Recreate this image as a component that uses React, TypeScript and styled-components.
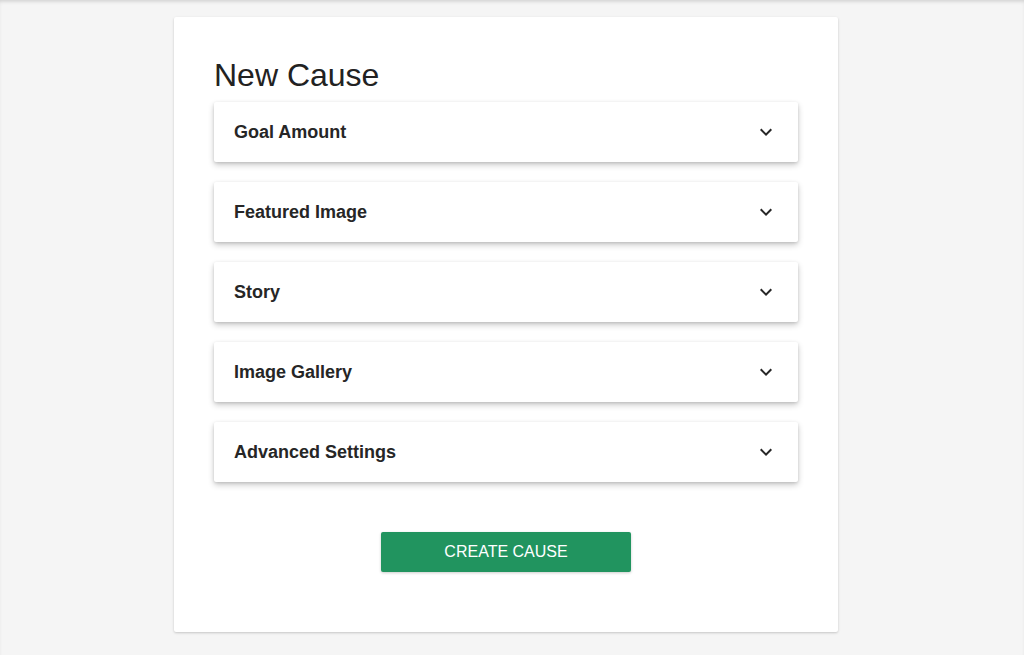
import styled, { createGlobalStyle } from "styled-components";

const GlobalStyle = createGlobalStyle`
  html, body {
    margin: 0;
    padding: 0;
    background-color: #f5f5f5;
    font-family: "Liberation Sans", Arial, sans-serif;
  }
`;

const Page = styled.div`
  min-height: 655px;
  box-sizing: border-box;
  padding: 17px 0 23px 174px;
  box-shadow: inset 0 3px 4px -2px rgba(0, 0, 0, 0.18);
`;

const Card = styled.div`
  width: 664px;
  box-sizing: border-box;
  padding: 39px 40px 60px;
  background-color: #fff;
  border-radius: 2px;
  box-shadow: 0 1px 3px rgba(0, 0, 0, 0.12), 0 1px 2px rgba(0, 0, 0, 0.08);
`;

const Title = styled.h1`
  margin: 0 0 8px;
  font-size: 32px;
  line-height: 38px;
  font-weight: 400;
  color: #222;
`;

const PanelList = styled.div`
  display: flex;
  flex-direction: column;
  gap: 20px;
`;

const Panel = styled.div`
  height: 60px;
  box-sizing: border-box;
  padding: 0 20px;
  display: flex;
  align-items: center;
  justify-content: space-between;
  background-color: #fff;
  border-radius: 2px;
  box-shadow: 0 3px 6px rgba(0, 0, 0, 0.2), 0 1px 3px rgba(0, 0, 0, 0.12);
  cursor: pointer;
`;

const PanelTitle = styled.span`
  font-size: 18px;
  font-weight: 700;
  color: #262626;
`;

const ChevronIcon = styled.svg`
  width: 24px;
  height: 24px;
  fill: #262626;
`;

const Actions = styled.div`
  display: flex;
  justify-content: center;
  margin-top: 50px;
`;

const CreateBtn = styled.button`
  width: 250px;
  height: 40px;
  border: none;
  border-radius: 2px;
  background-color: #21945f;
  color: #fff;
  font-family: "Liberation Sans", Arial, sans-serif;
  font-size: 16px;
  cursor: pointer;
  box-shadow: 0 1px 3px rgba(0, 0, 0, 0.2);
`;

const sections = [
  "Goal Amount",
  "Featured Image",
  "Story",
  "Image Gallery",
  "Advanced Settings",
];

export default function App() {
  return (
    <>
      <GlobalStyle />
      <Page>
        <Card>
          <Title>New Cause</Title>
          <PanelList>
            {sections.map((s) => (
              <Panel key={s}>
                <PanelTitle>{s}</PanelTitle>
                <ChevronIcon viewBox="0 0 24 24" aria-hidden="true">
                  <path d="M16.59 8.59 12 13.17 7.41 8.59 6 10l6 6 6-6z" />
                </ChevronIcon>
              </Panel>
            ))}
          </PanelList>
          <Actions>
            <CreateBtn>CREATE CAUSE</CreateBtn>
          </Actions>
        </Card>
      </Page>
    </>
  );
}
